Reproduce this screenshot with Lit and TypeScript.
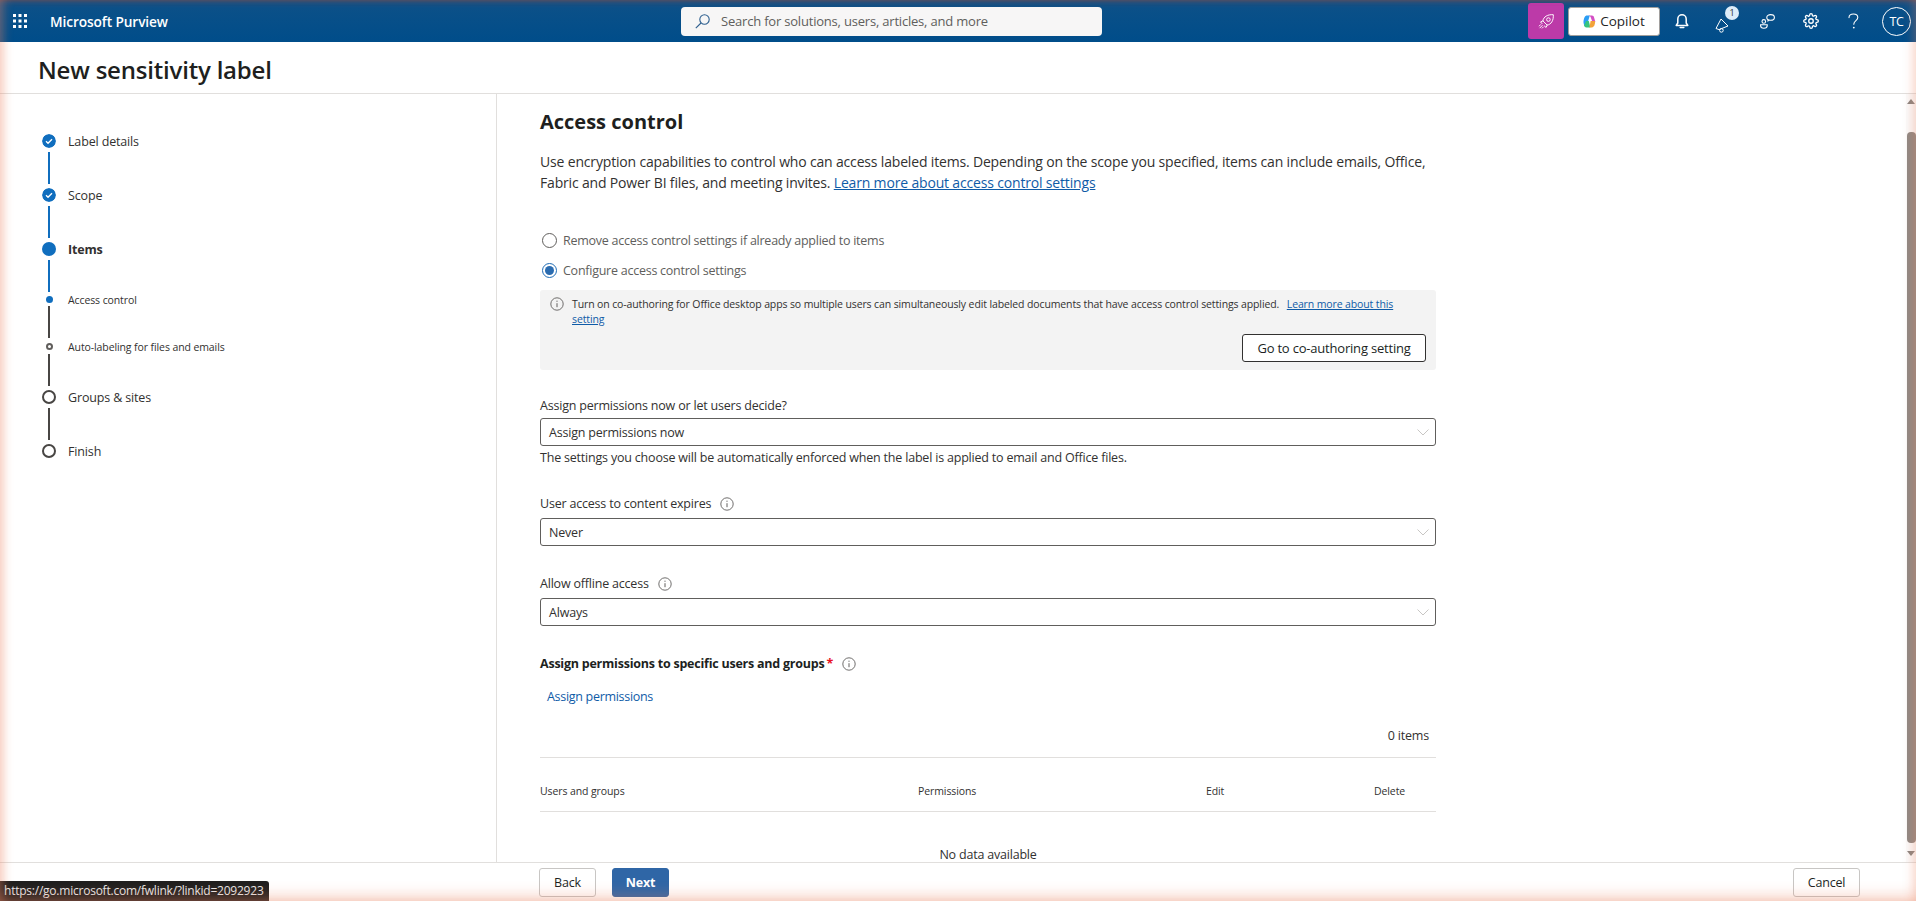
import { LitElement, css, html, svg } from 'lit';
import { customElement } from 'lit/decorators.js';

const info = (size = 14) => html`<svg class="info" width=${size} height=${size} viewBox="0 0 14 14" fill="none" stroke="#605e5c">
  <circle cx="7" cy="7" r="6.2" stroke-width="0.9"></circle>
  <path d="M7 6.2v4" stroke-width="1"></path>
  <circle cx="7" cy="4.2" r="0.6" fill="#605e5c" stroke="none"></circle>
</svg>`;

const chevron = svg`<svg class="chev" width="12" height="7" viewBox="0 0 12 7" fill="none" stroke="#c8c6c4" stroke-width="1"><path d="M0.5 0.5 6 6l5.5-5.5"></path></svg>`;

type Mark = 'done' | 'current' | 'subcurrent' | 'sub' | 'todo';
const steps: { label: string; mark: Mark; lineAfter?: 'blue' | 'grey' }[] = [
  { label: 'Label details', mark: 'done', lineAfter: 'blue' },
  { label: 'Scope', mark: 'done', lineAfter: 'blue' },
  { label: 'Items', mark: 'current', lineAfter: 'blue' },
  { label: 'Access control', mark: 'subcurrent', lineAfter: 'grey' },
  { label: 'Auto-labeling for files and emails', mark: 'sub', lineAfter: 'grey' },
  { label: 'Groups & sites', mark: 'todo', lineAfter: 'grey' },
  { label: 'Finish', mark: 'todo' },
];

@customElement('app-root')
export class AppRoot extends LitElement {
  static styles = css`
    :host {
      display: block;
      position: relative;
      width: 1916px;
      height: 901px;
      overflow: hidden;
      background: #fff;
      font-family: "Open Sans", "Liberation Sans", sans-serif;
      color: #323130;
    }
    .page { display: flex; flex-direction: column; height: 901px; }

    /* top bar */
    .top {
      height: 42px;
      flex: none;
      display: flex;
      align-items: center;
      background: linear-gradient(#3b4a68 0, #1d4f80 3px, #0b5088 8px, #004d8a 42px);
      color: #fff;
    }
    .waffle { margin-left: 13px; display: block; }
    .brand { margin-left: 23px; width: 158px; font-size: 13.7px; font-weight: 600; letter-spacing: -0.1px; white-space: nowrap; }
    .search {
      margin-left: 473px;
      width: 421px;
      height: 29px;
      box-sizing: border-box;
      background: #f7f6f6;
      border-radius: 4px;
      display: flex;
      align-items: center;
      padding-left: 14px;
      gap: 11px;
      color: #605e5c;
      font-size: 13px;
      letter-spacing: -0.2px;
    }
    .rocket {
      margin-left: 426px;
      width: 36px;
      height: 36px;
      background: #bc3aa8;
      border-radius: 3px;
      display: flex;
      align-items: center;
      justify-content: center;
    }
    .copilot {
      margin-left: 4px;
      width: 92px;
      height: 29px;
      box-sizing: border-box;
      background: #fff;
      border: 1px solid #a19f9d;
      border-radius: 3px;
      color: #242424;
      font-size: 13.5px;
      font-weight: 500;
      display: flex;
      align-items: center;
      justify-content: center;
      gap: 4px;
    }
    .icons { display: flex; }
    .ibtn { width: 43px; height: 42px; display: flex; align-items: center; justify-content: center; position: relative; }
    .badge {
      position: absolute;
      left: 22px;
      top: 6px;
      width: 14px;
      height: 14px;
      border-radius: 50%;
      background: #deecf9;
      color: #323130;
      font-size: 9px;
      line-height: 14px;
      text-align: center;
    }
    .avatar {
      margin-left: 7px;
      width: 29px;
      height: 29px;
      box-sizing: border-box;
      border: 1px solid #fff;
      border-radius: 50%;
      font-size: 12.5px;
      letter-spacing: -0.3px;
      line-height: 27px;
      text-align: center;
    }

    .title {
      height: 52px;
      flex: none;
      box-sizing: border-box;
      border-bottom: 1px solid #e1dfdd;
      padding: 7px 0 0 38px;
      font-size: 24px;
      line-height: 42px;
      font-weight: 600;
      color: #201f1e;
      white-space: nowrap;
      letter-spacing: -0.2px;
    }

    .body { flex: 1; min-height: 0; display: flex; }
    .nav {
      width: 497px;
      flex: none;
      box-sizing: border-box;
      border-right: 1px solid #e1dfdd;
      padding: 40px 0 0 39px;
      display: flex;
      flex-direction: column;
    }
    .step { display: flex; align-items: center; height: 14px; }
    .step.subcurrent { height: 6px; }
    .step.sub { height: 8px; }
    .marker { width: 20px; flex: none; display: flex; justify-content: center; }
    .dot { display: block; box-sizing: border-box; border-radius: 50%; }
    .dot.big { width: 14px; height: 14px; background: #106ebe; }
    .dot.ring { width: 14px; height: 14px; border: 2px solid #484644; }
    .dot.tiny { width: 7px; height: 7px; background: #106ebe; }
    .dot.tinyring { width: 7px; height: 7px; border: 2px solid #605e5c; }
    .lbl { margin-left: 9px; padding-top: 1px; font-size: 12.5px; letter-spacing: -0.15px; white-space: nowrap; color: #323130; }
    .lbl.bold { font-weight: 700; }
    .lbl.small { font-size: 10.5px; letter-spacing: -0.1px; padding-top: 2px; }
    .line { width: 2px; height: 32px; margin: 4px 0 4px 9px; }
    .line.blue { background: #106ebe; }
    .line.grey { background: #484644; }

    .main { flex: 1; min-width: 0; overflow: hidden; padding-left: 43px; }
    .content { width: 896px; }
    h2 { margin: 14px 0 0; font-size: 20px; line-height: 28px; font-weight: 700; color: #201f1e; }
    .intro { margin: 15px 0 0; font-size: 14px; line-height: 21px; letter-spacing: -0.17px; color: #323130; }
    a { color: #0f5ba7; text-decoration: underline; }
    .radio { display: flex; align-items: center; height: 20px; padding-left: 2px; font-size: 12.5px; letter-spacing: -0.25px; color: #605e5c; gap: 6px; }
    .radio.first { margin-top: 37px; }
    .radio.second { margin-top: 10px; }
    .rc { width: 15px; height: 15px; box-sizing: border-box; border-radius: 50%; border: 1px solid #605e5c; flex: none; }
    .rc.on { border-color: #1f6cb5; display: flex; align-items: center; justify-content: center; }
    .rc.on::after { content: ""; width: 9px; height: 9px; border-radius: 50%; background: #2b6cb0; }
    .notice {
      margin-top: 10px;
      height: 80px;
      box-sizing: border-box;
      background: #f3f3f3;
      border-radius: 3px;
      padding: 7px 10px 0 10px;
      display: flex;
      flex-direction: column;
    }
    .notice-row { display: flex; gap: 8px; font-size: 10.5px; line-height: 15px; letter-spacing: -0.12px; color: #323130; }
    .notice-row .info { flex: none; margin: 0; }
    .notice-row a { margin-left: 5px; }
    .go {
      align-self: flex-end;
      margin-top: 7px;
      width: 184px;
      height: 28px;
      box-sizing: border-box;
      background: #fff;
      border: 1px solid #323130;
      border-radius: 3px;
      font: 500 13px "Open Sans", sans-serif;
      color: #201f1e;
      letter-spacing: -0.2px;
      padding: 0;
    }
    .lab { font-size: 12.5px; line-height: 20px; letter-spacing: -0.2px; color: #323130; display: flex; align-items: center; gap: 9px; }
    .lab.l1 { margin-top: 26px; }
    .lab.l2 { margin-top: 26px; }
    .lab.l3 { margin-top: 28px; }
    .sel {
      margin-top: 2px;
      height: 28px;
      box-sizing: border-box;
      border: 1px solid #605e5c;
      border-radius: 3px;
      display: flex;
      align-items: center;
      justify-content: space-between;
      padding: 0 6px 0 8px;
      font-size: 12.5px;
      letter-spacing: -0.2px;
      color: #323130;
    }
    .sel.gap4 { margin-top: 4px; }
    .help { font-size: 12.5px; line-height: 20px; letter-spacing: -0.2px; margin-top: 2px; color: #323130; }
    .req { margin-top: 28px; font-weight: 700; font-size: 12.5px; line-height: 20px; letter-spacing: -0.23px; color: #201f1e; display: flex; align-items: center; gap: 9px; }
    .req i { color: #e81123; font-style: normal; margin-left: -7px; }
    .assign { margin: 13px 0 0 7px; font-size: 12.5px; line-height: 20px; letter-spacing: -0.3px; color: #0f5ba7; }
    .count { margin-top: 19px; padding-right: 7px; text-align: right; font-size: 12.5px; line-height: 20px; letter-spacing: -0.2px; }
    .table { margin-top: 11px; border-top: 1px solid #e1dfdd; }
    .thead {
      height: 54px;
      box-sizing: border-box;
      border-bottom: 1px solid #e1dfdd;
      display: grid;
      grid-template-columns: 378px 288px 168px auto;
      align-items: center;
      font-size: 10.5px;
      letter-spacing: -0.1px;
      padding-top: 13px;
    }
    .empty { margin-top: 33px; text-align: center; font-size: 12.5px; line-height: 20px; letter-spacing: -0.2px; }

    .scroll {
      width: 10px;
      flex: none;
      background: #fafafa;
      display: flex;
      flex-direction: column;
      align-items: center;
    }
    .arrow { height: 0; width: 0; border-left: 4px solid transparent; border-right: 4px solid transparent; flex: none; }
    .arrow.up { margin-top: 5px; border-bottom: 5px solid #8a8580; }
    .arrow.down { margin-top: 8px; border-top: 5px solid #8a8580; }
    .thumb { margin-top: 28px; width: 9px; height: 711px; background: #8f8984; border-radius: 4px; flex: none; }

    .foot {
      height: 39px;
      flex: none;
      box-sizing: border-box;
      border-top: 1px solid #e1dfdd;
      padding: 5px 56px 0 539px;
      display: flex;
      gap: 16px;
    }
    .btn {
      height: 29px;
      width: 57px;
      box-sizing: border-box;
      border: 1px solid #c8c6c4;
      border-radius: 3px;
      background: #fff;
      font: 500 12.5px "Open Sans", sans-serif;
      letter-spacing: -0.2px;
      color: #201f1e;
      padding: 0;
    }
    .btn.next { background: #2f66a6; border-color: #2f66a6; color: #fff; font-weight: 700; }
    .btn.cancel { margin-left: auto; width: 67px; }

    .status {
      position: absolute;
      left: 0;
      bottom: 0;
      height: 20px;
      width: 269px;
      box-sizing: border-box;
      background: #1f1f1f;
      color: #e8e8e8;
      border-top-right-radius: 3px;
      font-size: 12px;
      line-height: 20px;
      padding-left: 4px;
      letter-spacing: -0.23px;
      white-space: nowrap;
    }
    /* pink tint of the captured window edge */
    .edge {
      position: absolute;
      inset: 0;
      pointer-events: none;
      box-shadow: inset 8px 0 10px -4px rgba(235, 130, 95, 0.35), inset -8px 0 10px -4px rgba(235, 130, 95, 0.25), inset 0 -12px 14px -6px rgba(235, 130, 95, 0.32);
    }
  `;

  render() {
    return html`
      <div class="page">
        ${this.topBar()}
        <div class="title">New sensitivity label</div>
        <div class="body">
          ${this.nav()}
          ${this.main()}
          <div class="scroll">
            <div class="arrow up"></div>
            <div class="thumb"></div>
            <div class="arrow down"></div>
          </div>
        </div>
        <div class="foot">
          <button class="btn">Back</button>
          <button class="btn next">Next</button>
          <button class="btn cancel">Cancel</button>
        </div>
      </div>
      <div class="status">https://go.microsoft.com/fwlink/?linkid=2092923</div>
      <div class="edge"></div>
    `;
  }

  private topBar() {
    const dots = [0, 1, 2].flatMap((r) => [0, 1, 2].map((c) => svg`<rect x=${c * 5.5} y=${r * 5.5} width="3" height="3"></rect>`));
    return html`
      <div class="top">
        <svg class="waffle" width="14" height="14" viewBox="0 0 14 14" fill="#fff">${dots}</svg>
        <div class="brand">Microsoft Purview</div>
        <div class="search">
          <svg width="15" height="15" viewBox="0 0 15 15" fill="none" stroke="#2e5f8f" stroke-width="1.1">
            <circle cx="9.5" cy="5.5" r="4.7"></circle><path d="M6 9 0.8 14.2"></path>
          </svg>
          <span>Search for solutions, users, articles, and more</span>
        </div>
        <div class="rocket">
          <svg width="17" height="17" viewBox="0 0 16 16" fill="none" stroke="#fff" stroke-width="0.9">
            <path d="M4.6 7.4C5.2 3.6 9 1.2 14.4 1.6c.4 5.4-2 9.2-5.8 9.8L4.6 7.4Z"></path>
            <circle cx="9.8" cy="6.2" r="1.7"></circle>
            <path d="M4.6 7.4 2.4 8.4 3.8 10M8.6 11.4l-1 2.2L6 12.2M4 11.8 1.8 14M2.4 11 1.2 12.2M5 13.2l-1 1" stroke-linecap="round"></path>
          </svg>
        </div>
        <div class="copilot">
          <svg width="13" height="13" viewBox="0 0 13 13">
            <path d="M3.4 0.6h3.4L5 6.4 3.6 11 1.6 11C.4 9 .2 6.6.8 4.6 1.3 2.6 2.2 0.9 3.4 0.6Z" fill="#2a9df4"></path>
            <path d="M3.2 6h2.6l1.6 6.4H3.2C2.2 12.4 1.2 11.6 1 10.6L3.2 6Z" fill="#36c47e"></path>
            <path d="M5.4 0.6H9c1 0 1.8.8 2 1.6L12.4 7H9.4L7.8 2.6C7.6 1.8 6.4.6 5.4.6Z" fill="#d44fc4"></path>
            <path d="M7.6 6h4.4c.4 2-.4 4.4-1.4 5.6-.6.6-1.2.8-2 .8H6.4L7.6 6Z" fill="#f2a33a"></path>
          </svg>
          <span>Copilot</span>
        </div>
        <div class="icons">
          <div class="ibtn">
            <svg width="14" height="16" viewBox="0 0 14 16" fill="none" stroke="#fff" stroke-width="1.5">
              <path d="M2.8 6a4.2 4.2 0 0 1 8.4 0v4l1.6 2.4H1.2L2.8 10V6Z" stroke-linejoin="round"></path><path d="M5.2 14.4h3.6" stroke-linecap="round"></path>
            </svg>
          </div>
          <div class="ibtn">
            <svg width="14" height="16" viewBox="0 0 14 16" fill="none" stroke="#fff" stroke-width="1" style="margin:8px 6px 0 0">
              <path d="M1 11.5 6 2l7 7-9 3.6-3-1.1Z" stroke-linejoin="round"></path><circle cx="6.4" cy="13.4" r="1.8"></circle>
            </svg>
            <span class="badge">1</span>
          </div>
          <div class="ibtn">
            <svg width="15" height="15" viewBox="0 0 15 15" fill="none" stroke="#fff" stroke-width="1.1">
              <circle cx="3.8" cy="7.4" r="1.8"></circle><path d="M0.6 10.8h6.6v1c0 1.4-1.3 2.4-3.3 2.4S.6 13.2.6 11.8v-1Z"></path>
              <ellipse cx="10.6" cy="3.4" rx="3.8" ry="2.8"></ellipse><path d="M8.6 5.8 7.6 7.6"></path>
            </svg>
          </div>
          <div class="ibtn">
            <svg width="16" height="16" viewBox="0 0 24 24" fill="none" stroke="#fff" stroke-width="2">
              <circle cx="12" cy="12" r="3.4"></circle>
              <path d="M19.4 15a1.65 1.65 0 0 0 .33 1.82l.06.06a2 2 0 0 1 0 2.83 2 2 0 0 1-2.83 0l-.06-.06a1.65 1.65 0 0 0-1.82-.33 1.65 1.65 0 0 0-1 1.51V21a2 2 0 0 1-2 2 2 2 0 0 1-2-2v-.09A1.65 1.65 0 0 0 9 19.4a1.65 1.65 0 0 0-1.82.33l-.06.06a2 2 0 0 1-2.83 0 2 2 0 0 1 0-2.83l.06-.06a1.65 1.65 0 0 0 .33-1.82 1.65 1.65 0 0 0-1.51-1H3a2 2 0 0 1-2-2 2 2 0 0 1 2-2h.09A1.65 1.65 0 0 0 4.6 9a1.65 1.65 0 0 0-.33-1.82l-.06-.06a2 2 0 0 1 0-2.83 2 2 0 0 1 2.83 0l.06.06a1.65 1.65 0 0 0 1.82.33H9a1.65 1.65 0 0 0 1-1.51V3a2 2 0 0 1 2-2 2 2 0 0 1 2 2v.09a1.65 1.65 0 0 0 1 1.51 1.65 1.65 0 0 0 1.82-.33l.06-.06a2 2 0 0 1 2.83 0 2 2 0 0 1 0 2.83l-.06.06a1.65 1.65 0 0 0-.33 1.82V9a1.65 1.65 0 0 0 1.51 1H21a2 2 0 0 1 2 2 2 2 0 0 1-2 2h-.09a1.65 1.65 0 0 0-1.51 1z"></path>
            </svg>
          </div>
          <div class="ibtn">
            <svg width="11" height="17" viewBox="0 0 11 17" fill="none" stroke="#fff" stroke-width="1.1">
              <path d="M1 4.6C1 2.4 2.8 1 5.4 1s4.4 1.4 4.4 3.6c0 3-4 3.2-4 6.6" stroke-linecap="round"></path><circle cx="5.8" cy="14.6" r="0.9" fill="#fff" stroke="none"></circle>
            </svg>
          </div>
        </div>
        <div class="avatar">TC</div>
      </div>
    `;
  }

  private nav() {
    return html`<div class="nav">
      ${steps.map((s) => {
        const isSub = s.mark === 'sub' || s.mark === 'subcurrent';
        return html`
          <div class="step ${s.mark}">
            <span class="marker">${this.marker(s.mark)}</span>
            <span class="lbl ${s.mark === 'current' ? 'bold' : ''} ${isSub ? 'small' : ''}">${s.label}</span>
          </div>
          ${s.lineAfter ? html`<div class="line ${s.lineAfter}"></div>` : ''}
        `;
      })}
    </div>`;
  }

  private marker(m: Mark) {
    if (m === 'done') {
      return html`<svg class="dot" width="14" height="14" viewBox="0 0 14 14">
        <circle cx="7" cy="7" r="7" fill="#106ebe"></circle>
        <path d="M4 7.3 6 9.2 10 5.2" fill="none" stroke="#fff" stroke-width="1.4"></path>
      </svg>`;
    }
    if (m === 'current') return html`<span class="dot big"></span>`;
    if (m === 'subcurrent') return html`<span class="dot tiny"></span>`;
    if (m === 'sub') return html`<span class="dot tinyring"></span>`;
    return html`<span class="dot ring"></span>`;
  }

  private main() {
    return html`<div class="main"><div class="content">
      <h2>Access control</h2>
      <p class="intro">Use encryption capabilities to control who can access labeled items. Depending on the scope you specified, items can include emails, Office, Fabric and Power BI files, and meeting invites. <a>Learn more about access control settings</a></p>
      <div class="radio first"><span class="rc"></span>Remove access control settings if already applied to items</div>
      <div class="radio second"><span class="rc on"></span>Configure access control settings</div>
      <div class="notice">
        <div class="notice-row">
          ${info(14)}
          <div>Turn on co-authoring for Office desktop apps so multiple users can simultaneously edit labeled documents that have access control settings applied. <a>Learn more about this setting</a></div>
        </div>
        <button class="go">Go to co-authoring setting</button>
      </div>
      <div class="lab l1">Assign permissions now or let users decide?</div>
      <div class="sel"><span>Assign permissions now</span>${chevron}</div>
      <div class="help">The settings you choose will be automatically enforced when the label is applied to email and Office files.</div>
      <div class="lab l2">User access to content expires ${info(14)}</div>
      <div class="sel gap4"><span>Never</span>${chevron}</div>
      <div class="lab l3">Allow offline access ${info(14)}</div>
      <div class="sel gap4"><span>Always</span>${chevron}</div>
      <div class="req"><span>Assign permissions to specific users and groups</span><i>*</i>${info(14)}</div>
      <div class="assign">Assign permissions</div>
      <div class="count">0 items</div>
      <div class="table">
        <div class="thead"><span>Users and groups</span><span>Permissions</span><span>Edit</span><span>Delete</span></div>
      </div>
      <div class="empty">No data available</div>
    </div></div>`;
  }
}
